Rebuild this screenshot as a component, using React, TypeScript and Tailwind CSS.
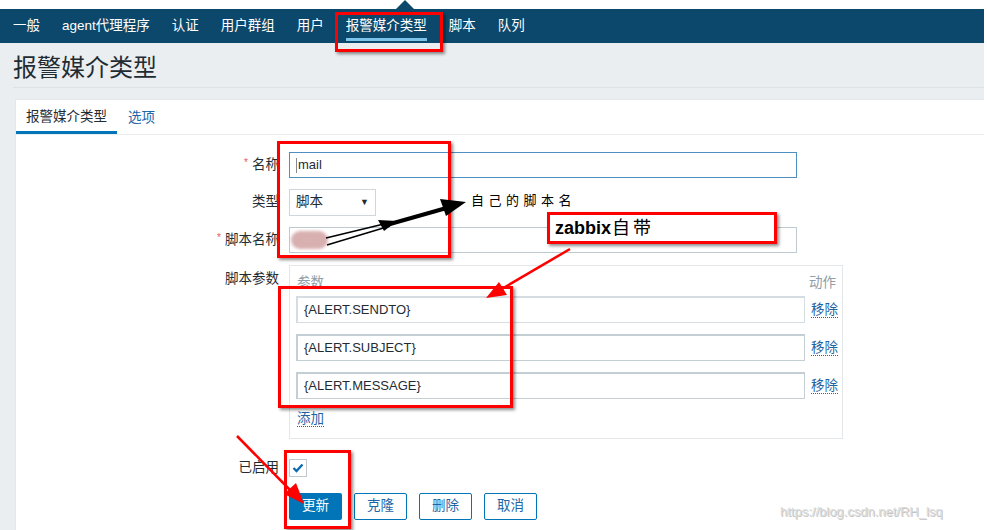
import React from 'react';

const navItems = ['一般', 'agent代理程序', '认证', '用户群组', '用户', '报警媒介类型', '脚本', '队列'];
const params = ['{ALERT.SENDTO}', '{ALERT.SUBJECT}', '{ALERT.MESSAGE}'];

const Label = ({ text, required }: { text: string; required?: boolean }) => (
  <div className="w-[263px] text-right text-[13.5px] text-[#1f2c33] shrink-0 whitespace-nowrap">
    {required && <span className="text-[#e45959] text-[10px] mr-[4px] align-top">*</span>}
    {text}
  </div>
);

const Annotations = () => (
  <div className="absolute inset-0 pointer-events-none">
    {/* red boxes */}
    <div className="absolute left-[335px] top-[12px] w-[108px] h-[40px] border-[3px] border-[#f00] shadow-[2px_2px_3px_rgba(0,0,0,0.45)]" />
    <div className="absolute left-[277px] top-[141px] w-[174px] h-[117px] border-[3px] border-[#f00] shadow-[2px_2px_3px_rgba(0,0,0,0.45)]" />
    <div className="absolute left-[278px] top-[286px] w-[235px] h-[122px] border-[3px] border-[#f00] shadow-[2px_2px_3px_rgba(0,0,0,0.45)]" />
    <div className="absolute left-[284px] top-[450px] w-[67px] h-[79px] border-[3px] border-[#f00] shadow-[2px_2px_3px_rgba(0,0,0,0.45)]" />
    <div className="absolute left-[547px] top-[212px] w-[230px] h-[32px] bg-white border-[3px] border-[#f00] shadow-[2px_2px_3px_rgba(0,0,0,0.45)] flex items-center pl-[5px] text-[18px] font-bold text-black leading-none">
      zabbix<span className="tracking-[3px] ml-[1px] font-normal">自带</span>
    </div>
    <div className="absolute left-[471px] top-[191px] text-[13px] tracking-[4.5px] text-black">自己的脚本名</div>
    <div className="absolute left-[780px] top-[502px] text-[13px] text-[#dcdcdc] [text-shadow:1px_1px_0_#c4c4c4]">https://blog.csdn.net/RH_lsq</div>
    <svg className="absolute inset-0" width="987" height="530" viewBox="0 0 987 530">
      {/* black arrows */}
      <line x1="326" y1="238" x2="388" y2="223" stroke="#000" strokeWidth="1.5" />
      <line x1="327" y1="245" x2="390" y2="226" stroke="#000" strokeWidth="1.5" />
      <polygon points="397,221 378,220 384,231" fill="#000" />
      <line x1="383" y1="226" x2="450" y2="207" stroke="#000" strokeWidth="4" />
      <polygon points="466,202 440,199 446,216" fill="#000" />
      {/* red arrows */}
      <line x1="570" y1="249" x2="500" y2="290" stroke="#f00" strokeWidth="2.5" />
      <polygon points="486,298 499,282 507,295" fill="#f00" />
      <line x1="237" y1="436" x2="292" y2="492" stroke="#f00" strokeWidth="2.5" />
      <polygon points="304,504 284,494 296,483" fill="#f00" />
    </svg>
  </div>
);

export default function App() {
  return (
    <div className="relative w-[987px] h-[530px] overflow-hidden bg-white font-['Liberation_Sans','Noto_Sans_CJK_SC',sans-serif]">
      <div className="w-[984px]">
        {/* top strip with notch */}
        <div className="relative h-[9px] bg-white">
          <div className="absolute left-[396px] top-0 w-0 h-0 border-l-[9px] border-r-[9px] border-b-[9px] border-l-transparent border-r-transparent border-b-[#0b486b]" />
        </div>
        {/* nav */}
        <nav className="h-[34px] bg-[#0b486b] flex items-stretch pl-[13px] gap-[22px] text-[13.5px] text-white">
          {navItems.map((item) => (
            <div key={item} className="relative flex items-center">
              {item}
              {item === '报警媒介类型' && (
                <span className="absolute left-0 right-0 bottom-[2px] h-[3px] bg-[#7cc3ea]" />
              )}
            </div>
          ))}
        </nav>
        {/* page */}
        <div className="bg-[#ebeef0] h-[487px] flex flex-col">
          <div className="ml-[13px] pt-[10px] pb-[5px] border-b border-[#dde2e5]">
            <h1 className="text-[24px] leading-[29px] text-[#1f2c33]">报警媒介类型</h1>
          </div>
          <div className="ml-[15px] mt-[11px] flex-1 bg-white border-l border-t border-[#e4e7ea]">
            {/* tabs */}
            <div className="flex h-[35px] border-b border-[#ebeef0] text-[13.5px]">
              <div className="px-[10px] flex items-center border-b-[3px] border-[#0275b8] text-[#1f2c33] pt-[3px]">报警媒介类型</div>
              <div className="px-[11px] flex items-center text-[#1f65a6] pt-[3px]">选项</div>
            </div>
            {/* form */}
            <div className="pt-[17px] flex flex-col">
              <div className="flex items-center gap-[10px] h-[26px]">
                <Label text="名称" required />
                <div className="w-[508px] h-[26px] border border-[#4f90c2] flex items-center pl-[6px] text-[13px] text-[#1f2c33]">
                  <span className="w-px h-[15px] bg-[#888] mr-[1px]" />mail
                </div>
              </div>
              <div className="flex items-center gap-[10px] h-[27px] mt-[11px]">
                <Label text="类型" />
                <div className="w-[87px] h-[27px] border border-[#cfd7dc] flex items-center justify-between px-[6px] text-[13.5px] text-[#1f2c33]">
                  <span>脚本</span>
                  <span className="text-[9px]">▼</span>
                </div>
              </div>
              <div className="flex items-center gap-[10px] h-[26px] mt-[11px]">
                <Label text="脚本名称" required />
                <div className="relative w-[508px] h-[26px] border border-[#bfc9d0]">
                  <div className="absolute left-[1px] top-[3px] w-[37px] h-[18px] rounded-full bg-[#d9b0b0] blur-[1.5px]" />
                </div>
              </div>
              <div className="flex items-start gap-[10px] mt-[12px]">
                <div className="pt-[4px]"><Label text="脚本参数" /></div>
                <div className="w-[554px] h-[174px] border border-[#e4e7ea] pl-[6px] pr-[4px] pt-[9px]">
                  <div className="flex justify-between text-[13.5px] text-[#8f9ea7] leading-[16px] pl-[1px] pr-[2px]">
                    <span>参数</span>
                    <span>动作</span>
                  </div>
                  <div className="flex flex-col gap-[11px] mt-[5px]">
                    {params.map((p, i) => (
                      <div key={p} className="flex items-center gap-[6px] whitespace-nowrap">
                        <div className={`w-[509px] h-[27px] shrink-0 border-2 ${i === 0 ? 'border-[#d5dde2]' : 'border-[#c4ced5]'} border-b border-r flex items-center pl-[6px] text-[13px] text-[#1f2c33]`}>
                          {p}
                        </div>
                        <span className="text-[13.5px] text-[#1f65a6] border-b border-dotted border-[#1f65a6] leading-[15px]">移除</span>
                      </div>
                    ))}
                  </div>
                  <div className="mt-[7px] pl-[1px]">
                    <span className="text-[13.5px] text-[#1f65a6] border-b border-dotted border-[#1f65a6] leading-[15px]">添加</span>
                  </div>
                </div>
              </div>
              <div className="flex items-center gap-[10px] mt-[20px] h-[18px]">
                <Label text="已启用" />
                <div className="w-[18px] h-[18px] border border-[#bfc9d0] flex items-center justify-center">
                  <svg width="12" height="10" viewBox="0 0 12 10">
                    <path d="M1.5 5 L4.5 8 L10.5 1.5" fill="none" stroke="#0b6cb0" strokeWidth="2.4" />
                  </svg>
                </div>
              </div>
              <div className="flex gap-[12px] mt-[16px] ml-[273px] text-[13.5px]">
                <button className="w-[53px] h-[27px] bg-[#0275b8] text-white rounded-[2px]">更新</button>
                <button className="w-[53px] h-[27px] border border-[#0275b8] text-[#1f65a6] rounded-[2px] bg-white">克隆</button>
                <button className="w-[53px] h-[27px] border border-[#0275b8] text-[#1f65a6] rounded-[2px] bg-white">删除</button>
                <button className="w-[53px] h-[27px] border border-[#0275b8] text-[#1f65a6] rounded-[2px] bg-white">取消</button>
              </div>
            </div>
          </div>
        </div>
      </div>
      <Annotations />
    </div>
  );
}
